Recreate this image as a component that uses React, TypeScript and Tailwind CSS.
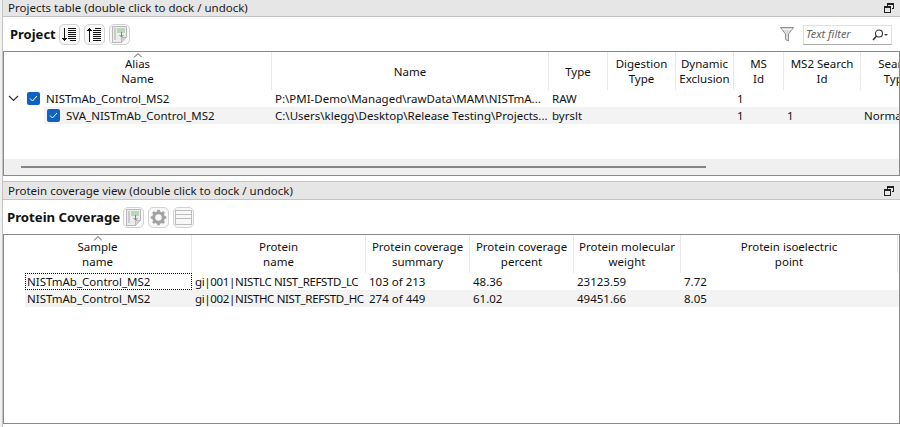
import React from 'react';

const FONT = "[font-family:'Noto_Sans','Open_Sans',sans-serif]";

const DockIcon = () => (
  <svg width="10" height="10" viewBox="0 0 10 10" fill="none" stroke="#222" strokeWidth="1" shapeRendering="crispEdges">
    <path d="M3.5 2.5V.5h6v5h-2" />
    <path d="M3.5 1.5h6" />
    <rect x="0.5" y="3.5" width="6" height="6" />
    <path d="M.5 4.5h6" />
  </svg>
);

const TitleBar = ({ text }: { text: string }) => (
  <div className="h-[19px] bg-[#e6e6e6] border-y border-[#c4c4c4] flex items-center justify-between pl-[5px] pr-[6px] text-[#1a1a1a]">
    <span className="text-[11.5px] leading-none">{text}</span>
    <DockIcon />
  </div>
);

const ToolButton = ({ children }: { children: React.ReactNode }) => (
  <div className="w-[21px] h-[21px] rounded-[5px] border border-[#d2d2d2] bg-[#f8f8f8] flex items-center justify-center">{children}</div>
);

const LinesIcon = ({ up }: { up?: boolean }) => (
  <svg width="15" height="15" viewBox="0 0 15 15" fill="none" stroke="#111" strokeWidth="1" shapeRendering="crispEdges">
    {up ? (
      <path d="M8 1.5h6M6 3.5h8M6 5.5h8M6 7.5h8M6 9.5h8M6 11.5h8M6 13.5h8" />
    ) : (
      <path d="M6 1.5h8M6 3.5h8M6 5.5h8M6 7.5h8M6 9.5h8M6 11.5h8M8 13.5h6" />
    )}
    {up ? <path d="M2.5 14.5V3" strokeWidth="1" /> : <path d="M2.5 .5V12" strokeWidth="1" />}
    {up ? <path d="M0 4 2.5 .5 5 4z" fill="#111" stroke="none" /> : <path d="M0 11 2.5 14.5 5 11z" fill="#111" stroke="none" />}
  </svg>
);

const ExportIcon = () => (
  <svg width="15" height="17" viewBox="0 0 15 17" fill="none">
    <path d="M.5.5h14v11l-5 5H.5z" fill="#ececec" stroke="#b8b8b8" />
    <path d="M2 3h2M2 5h2M2 7h2M2 9h2M2 11h2M2 13h2" stroke="#a8a8a8" />
    <rect x="5" y="2" width="8" height="5" fill="#b9d8b9" />
    <path d="M9.5 6v5M7.5 9l2 2 2-2" stroke="#808080" />
    <path d="M9.5 16.5v-5h5" fill="#d4d4d4" stroke="#b8b8b8" />
  </svg>
);

const GearIcon = () => (
  <svg width="17" height="17" viewBox="0 0 24 24" fill="none" stroke="#a2a2a2">
    <circle cx="12" cy="12" r="6.8" strokeWidth="4.4" />
    <path d="M12 1v5M12 18v5M1 12h5M18 12h5M4.2 4.2l3.5 3.5M16.3 16.3l3.5 3.5M4.2 19.8l3.5-3.5M16.3 7.7l3.5-3.5" strokeWidth="3.8" />
  </svg>
);

const PanelIcon = () => (
  <svg width="17" height="17" viewBox="0 0 17 17" fill="none" stroke="#bcbcbc" shapeRendering="crispEdges">
    <rect x="0.5" y="1.5" width="16" height="14" />
    <path d="M.5 5.5h16M.5 9.5h16" />
  </svg>
);

const FilterIcon = () => (
  <svg width="14" height="15" viewBox="0 0 14 15" fill="none" stroke="#8f8f8f">
    <path d="M.5.5h13L8.5 7v7l-3-1.5V7z" fill="#dcdcdc" />
    <path d="M2.5 2.5h9" stroke="#f4f4f4" />
  </svg>
);

const SearchIcon = () => (
  <svg width="16" height="12" viewBox="0 0 16 12" fill="none" stroke="#333">
    <circle cx="7" cy="4.5" r="3.5" strokeWidth="1.1" />
    <path d="M4.5 7 1 11" strokeWidth="1.5" />
    <path d="M12 5h4l-2 2z" fill="#444" stroke="none" />
  </svg>
);

const CheckBox = () => (
  <div className="w-[13px] h-[13px] rounded-[2px] bg-[#0f62c0] flex items-center justify-center shrink-0">
    <svg width="9" height="9" viewBox="0 0 9 9" fill="none" stroke="#fff" strokeWidth="1">
      <path d="M1 4.5 3.5 7 8 2" />
    </svg>
  </div>
);

const SortCaret = () => (
  <svg className="absolute top-[1px] left-1/2 -translate-x-1/2" width="9" height="5" viewBox="0 0 9 5" fill="none" stroke="#555">
    <path d="M.5 4.5l4-4 4 4" />
  </svg>
);

type Col = { w: string; lines: string[]; sort?: boolean };

const HeaderRow = ({ cols }: { cols: Col[] }) => (
  <div className="flex h-[38px] shrink-0">
    {cols.map((c, i) => (
      <div key={i} className={`${c.w} relative shrink-0 border-r border-[#e8e8e8] flex flex-col items-center justify-center text-center leading-[15px] whitespace-nowrap`}>
        {c.sort && <SortCaret />}
        {c.lines.map(l => <span key={l}>{l}</span>)}
      </div>
    ))}
  </div>
);

const projectCols: Col[] = [
  { w: 'w-[268px]', lines: ['Alias', 'Name'], sort: true },
  { w: 'w-[277px]', lines: ['Name'] },
  { w: 'w-[59px]', lines: ['Type'] },
  { w: 'w-[68px]', lines: ['Digestion', 'Type'] },
  { w: 'w-[58px]', lines: ['Dynamic', 'Exclusion'] },
  { w: 'w-[50px]', lines: ['MS', 'Id'] },
  { w: 'w-[77px]', lines: ['MS2 Search', 'Id'] },
  { w: 'w-[72px]', lines: ['Search', 'Type'] },
];

const coverageCols: Col[] = [
  { w: 'w-[188px]', lines: ['Sample', 'name'], sort: true },
  { w: 'w-[174px]', lines: ['Protein', 'name'] },
  { w: 'w-[104px]', lines: ['Protein coverage', 'summary'] },
  { w: 'w-[104px]', lines: ['Protein coverage', 'percent'] },
  { w: 'w-[107px]', lines: ['Protein molecular', 'weight'] },
  { w: 'w-[217px]', lines: ['Protein isoelectric', 'point'] },
];

const Cell = ({ w, children, cls = '' }: { w: string; children?: React.ReactNode; cls?: string }) => (
  <div className={`${w} shrink-0 pl-[3px] whitespace-nowrap ${cls}`}>{children}</div>
);

export default function App() {
  return (
    <div className={`w-[900px] h-[427px] overflow-hidden bg-white text-[11.5px] text-[#111] ${FONT} flex`}>
      <div className="w-[3px] shrink-0 bg-[#f0f0f0] border-r border-[#c4c4c4]" />
      <div className="flex-1 min-w-0 flex flex-col">
        <div className="-mt-[2px]">
          <TitleBar text="Projects table (double click to dock / undock)" />
        </div>

        <div className="h-[34px] flex items-center pl-[7px] pr-[8px] pt-[1px]">
          <span className="text-[13px] font-bold mr-[3px]">Project</span>
          <div className="flex gap-[4px]">
            <ToolButton><LinesIcon /></ToolButton>
            <ToolButton><LinesIcon up /></ToolButton>
            <ToolButton><ExportIcon /></ToolButton>
          </div>
          <div className="ml-auto flex items-center gap-[9px]">
            <FilterIcon />
            <div className="w-[89px] h-[20px] bg-white border border-[#e0e0e0] border-b-[#a8a8a8] flex items-center justify-between pl-[2px] pr-[3px]">
              <span className="italic text-[#666] text-[11px]">Text filter</span>
              <SearchIcon />
            </div>
          </div>
        </div>

        <div className="h-[125px] shrink-0 border border-[#8a8a8a] flex flex-col overflow-hidden">
          <HeaderRow cols={projectCols} />
          <div className="h-[17px] flex items-center shrink-0">
            <div className="w-[268px] shrink-0 flex items-center pl-[4px]">
              <svg width="11" height="7" viewBox="0 0 11 7" fill="none" stroke="#333" strokeWidth="1.2"><path d="M1 1l4.5 4.5L10 1" /></svg>
              <span className="ml-[8px] mr-[6px]"><CheckBox /></span>
              <span>NISTmAb_Control_MS2</span>
            </div>
            <Cell w="w-[277px]">P:\PMI-Demo\Managed\rawData\MAM\NISTmA...</Cell>
            <Cell w="w-[59px]">RAW</Cell>
            <Cell w="w-[68px]" />
            <Cell w="w-[58px]" />
            <Cell w="w-[50px]">1</Cell>
          </div>
          <div className="h-[17px] flex items-center shrink-0">
            <div className="w-[40px] shrink-0" />
            <div className="flex-1 h-full bg-[#f3f3f3] flex items-center">
              <div className="w-[228px] shrink-0 flex items-center pl-[3px]">
                <span className="mr-[6px]"><CheckBox /></span>
                <span>SVA_NISTmAb_Control_MS2</span>
              </div>
              <Cell w="w-[277px]">C:\Users\klegg\Desktop\Release Testing\Projects...</Cell>
              <Cell w="w-[59px]">byrslt</Cell>
              <Cell w="w-[68px]" />
              <Cell w="w-[58px]" />
              <Cell w="w-[50px]">1</Cell>
              <Cell w="w-[77px]">1</Cell>
              <Cell w="w-[72px]">Normal</Cell>
            </div>
          </div>
          <div className="flex-1" />
          <div className="h-[16px] shrink-0 bg-[#f0f0f0] flex items-center pl-[17px]">
            <div className="w-[685px] h-[2px] bg-[#858585]" />
          </div>
        </div>

        <div className="mt-[5px]">
          <TitleBar text="Protein coverage view (double click to dock / undock)" />
        </div>

        <div className="h-[34px] flex items-center pl-[4px] pt-[1px]">
          <span className="text-[13.2px] font-bold mr-[3px]">Protein Coverage</span>
          <div className="flex gap-[4px]">
            <ToolButton><ExportIcon /></ToolButton>
            <ToolButton><GearIcon /></ToolButton>
            <ToolButton><PanelIcon /></ToolButton>
          </div>
        </div>

        <div className="h-[190px] shrink-0 border border-[#8a8a8a] overflow-hidden">
          <HeaderRow cols={coverageCols} />
          {[
            ['NISTmAb_Control_MS2', 'gi|001|NISTLC NIST_REFSTD_LC', '103 of 213', '48.36', '23123.59', '7.72'],
            ['NISTmAb_Control_MS2', 'gi|002|NISTHC NIST_REFSTD_HC', '274 of 449', '61.02', '49451.66', '8.05'],
          ].map((r, i) => (
            <div key={i} className="h-[17px] flex items-center pl-[21px]">
              <div className={`flex-1 h-full flex items-center ${i === 1 ? 'bg-[#f3f3f3]' : ''}`}>
                <div className={`w-[167px] h-full shrink-0 flex items-center ${i === 0 ? 'border border-dotted border-black pl-[1px]' : 'pl-[2px]'}`}>{r[0]}</div>
                <Cell w="w-[174px]" cls="tracking-[-0.35px]">{r[1]}</Cell>
                <Cell w="w-[104px]">{r[2]}</Cell>
                <Cell w="w-[104px]">{r[3]}</Cell>
                <Cell w="w-[107px]">{r[4]}</Cell>
                <Cell w="w-[200px]">{r[5]}</Cell>
              </div>
            </div>
          ))}
        </div>
      </div>
    </div>
  );
}
